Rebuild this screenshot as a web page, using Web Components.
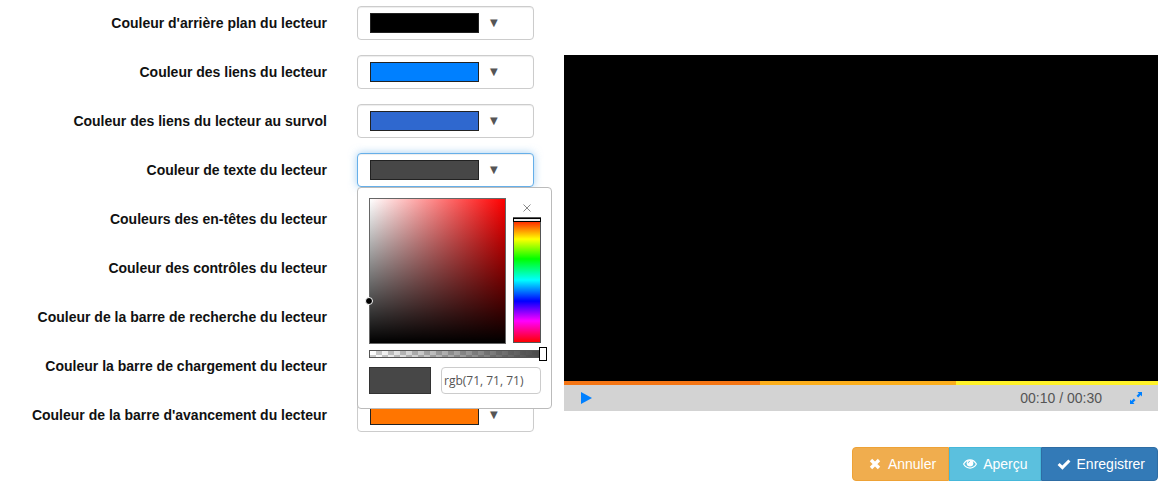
<!DOCTYPE html>
<html lang="fr">
<head>
<meta charset="utf-8">
<title>Couleurs du lecteur</title>
<meta name="viewport" content="width=device-width, initial-scale=1">
<style>
  body { margin: 0; background: #fff; color: #111; font: 14px/20px "Liberation Sans", Arial, sans-serif; }
</style>
</head>
<body>
<player-settings></player-settings>

<template id="settings-tpl">
  <style>
    :host { display: block; padding: 6px 7px 6px 0; }
    .page { display: grid; grid-template-columns: 534fr 594fr; column-gap: 30px; align-items: start; }
    form { display: grid; row-gap: 15px; }
    .preview { padding-top: 49px; }
    .actions { display: flex; justify-content: flex-end; margin-top: 36px; }
  </style>
  <main class="page">
    <form>
      <color-field label="Couleur d'arrière plan du lecteur" color="#000000"></color-field>
      <color-field label="Couleur des liens du lecteur" color="#0080ff"></color-field>
      <color-field label="Couleur des liens du lecteur au survol" color="#2f68cf"></color-field>
      <color-field label="Couleur de texte du lecteur" color="#474747" open>
        <color-picker></color-picker>
      </color-field>
      <color-field label="Couleurs des en-têtes du lecteur" color="#d3d3d3"></color-field>
      <color-field label="Couleur des contrôles du lecteur" color="#0080ff"></color-field>
      <color-field label="Couleur de la barre de recherche du lecteur" color="#fff020"></color-field>
      <color-field label="Couleur la barre de chargement du lecteur" color="#ffad17"></color-field>
      <color-field label="Couleur de la barre d'avancement du lecteur" color="#ff7500"></color-field>
    </form>
    <section class="preview">
      <video-preview></video-preview>
      <div class="actions">
        <action-button kind="cancel">
          <svg slot="icon" width="12" height="12" viewBox="0 0 12 12"><path d="M2 2 10 10M10 2 2 10" stroke="#fff" stroke-width="3.4" fill="none"/></svg>Annuler</action-button>
        <action-button kind="view">
          <svg slot="icon" width="14" height="12" viewBox="0 0 14 12"><path fill="none" stroke="#fff" stroke-width="1.2" d="M.6 6C2.200 3.300 4.400 1.900 7 1.900S11.800 3.300 13.400 6C11.800 8.700 9.600 10.100 7 10.100S2.200 8.700 .6 6Z"/><circle cx="7" cy="5.200" r="3.300" fill="#fff"/><path d="M5.200 5.200A1.800 1.800 0 0 1 7 3.400" stroke="#5bc0de" stroke-width=".8" fill="none"/></svg>Aperçu</action-button>
        <action-button kind="save">
          <svg slot="icon" width="14" height="12" viewBox="0 0 14 12"><path d="M1.600 6 5.400 9.600 12.400 2.500" stroke="#fff" stroke-width="3" fill="none"/></svg>Enregistrer</action-button>
      </div>
    </section>
  </main>
</template>

<template id="field-tpl">
  <style>
    :host { display: grid; grid-template-columns: 327fr 177fr; column-gap: 30px; align-items: center; }
    label { text-align: right; font-weight: 700; white-space: nowrap; }
    .control { position: relative; }
    button {
      box-sizing: border-box; display: flex; align-items: center; width: 100%; height: 34px; padding: 0 12px;
      gap: 11px; background: #fff; border: 1px solid #ccc; border-radius: 4px; cursor: pointer;
      box-shadow: inset 0 1px 1px rgba(0,0,0,.075); color: #555; font: 10px/20px "DejaVu Sans", sans-serif;
    }
    :host([open]) button { border-color: #66afe9; box-shadow: inset 0 1px 1px rgba(0,0,0,.075), 0 0 8px rgba(102,175,233,.6); }
    .swatch { box-sizing: border-box; width: 109px; height: 20px; border: 1px solid #222; }
    ::slotted(color-picker) { position: absolute; z-index: 2; top: 100%; left: 0; }
  </style>
  <label for="pick"></label>
  <div class="control">
    <button id="pick" type="button"><span class="swatch"></span><span aria-hidden="true">▼</span></button>
    <slot></slot>
  </div>
</template>

<template id="picker-tpl">
  <style>
    :host { display: block; box-sizing: border-box; width: 195px; padding: 10px 10px 14px 11px; background: #fff;
            border: 1px solid #bbb; border-radius: 4px; }
    .top { display: grid; grid-template-columns: 137px 28px; column-gap: 7px; }
    .plane { position: relative; box-sizing: border-box; height: 146px; border: 1px solid #666;
             background: linear-gradient(to top, #000, transparent), linear-gradient(to right, #fff, #f00); }
    .dot { position: absolute; box-sizing: border-box; left: -5px; top: 68%; width: 8px; height: 8px; border: 1px solid #fff; border-radius: 50%; background: #000; }
    .side { display: flex; flex-direction: column; align-items: center; }
    .close { height: 19px; width: 28px; padding: 0; border: 0; background: none; cursor: pointer; display: grid; place-items: center; }
    input { box-sizing: border-box; margin: 0; }
    input[type=range] { appearance: none; -webkit-appearance: none; display: block; border: 1px solid #555; }
    .hue { writing-mode: vertical-lr; width: 28px; height: 126px;
           background: linear-gradient(to bottom, #f00, #ff0 17%, #0f0 33%, #0ff 50%, #00f 67%, #f0f 83%, #f00); }
    .hue::-webkit-slider-thumb { -webkit-appearance: none; box-sizing: border-box; width: 28px; height: 4px; margin: 0 -1px; border: 1px solid #000; background: #eee; }
    .alpha { width: 174px; height: 8px; margin-top: 6px;
             background: linear-gradient(to right, transparent, #474747), repeating-conic-gradient(#fff 0 25%, #ccc 0 50%) 0 4px / 12px 12px; }
    .alpha::-webkit-slider-thumb { -webkit-appearance: none; box-sizing: border-box; width: 8px; height: 14px; border: 1px solid #000; background: #fff; position: relative; left: 5px; }
    .bottom { display: grid; grid-template-columns: 62px 100px; column-gap: 10px; margin-top: 9px; }
    .current { background: #474747; border: 1px solid #333; box-sizing: border-box; }
    .value { width: 100%; height: 27px; padding: 0 2px; border: 1px solid #ccc; border-radius: 4px; color: #555; font: 12px/16px "Open Sans", sans-serif; }
  </style>
  <div class="top">
    <div class="plane"><span class="dot"></span></div>
    <div class="side">
      <button class="close" type="button" aria-label="Fermer"><svg width="8" height="8" viewBox="0 0 8 8"><path d="M.5.5 7.500 7.500M7.500.5.5 7.500" stroke="#888"/></svg></button>
      <input class="hue" type="range" min="0" max="360" value="0" aria-label="Teinte">
    </div>
  </div>
  <input class="alpha" type="range" min="0" max="100" value="100" aria-label="Opacité">
  <div class="bottom">
    <div class="current"></div>
    <input class="value" type="text" value="rgb(71, 71, 71)" aria-label="Valeur de la couleur">
  </div>
</template>

<template id="video-tpl">
  <style>
    :host { display: block; color: #555; }
    .screen { background: #000; aspect-ratio: 594 / 326; }
    .progress { display: grid; grid-template-columns: 33fr 33fr 34fr; height: 4px; }
    .played { background: #f47514; } .loaded { background: #fbae1c; } .rest { background: #fff22a; }
    .bar { display: flex; align-items: center; height: 26px; padding: 0 15px 0 16px; background: #d3d3d3; }
    button { display: grid; place-items: center; padding: 0; border: 0; background: none; color: #0080ff; cursor: pointer; }
    .time { margin-left: auto; margin-right: 27px; }
  </style>
  <div class="screen"></div>
  <div class="progress"><div class="played"></div><div class="loaded"></div><div class="rest"></div></div>
  <div class="bar">
    <button type="button" aria-label="Lecture"><svg width="13" height="12" viewBox="0 0 13 12"><path d="M1 0 12 6 1 12Z" fill="currentColor"/></svg></button>
    <span class="time">00:10 / 00:30</span>
    <button type="button" aria-label="Plein écran"><svg width="14" height="12" viewBox="0 0 14 12"><path d="M8.500 0H13V4.500L11.600 3.100 9.200 5.500 7.500 3.800 9.900 1.400ZM5.500 12H1V7.500L2.400 8.900 4.800 6.500 6.500 8.200 4.100 10.600Z" fill="currentColor"/></svg></button>
  </div>
</template>

<template id="action-tpl">
  <style>
    :host { display: block; }
    button { box-sizing: border-box; display: flex; align-items: center; gap: 6px; height: 34px; padding: 0 12px 0 14px;
             border: 1px solid; color: #fff; font: inherit; cursor: pointer; white-space: nowrap; }
    ::slotted(svg) { display: block; }
    :host([kind=cancel]) button { background: #f0ad4e; border-color: #eea236; border-radius: 4px 0 0 4px; padding-left: 16px; gap: 7px; }
    :host([kind=view]) button { background: #5bc0de; border-color: #46b8da; padding-left: 13px; }
    :host([kind=save]) button { background: #337ab7; border-color: #2e6da4; border-radius: 0 4px 4px 0; padding-left: 15px; }
  </style>
  <button type="button"><slot name="icon"></slot><span><slot></slot></span></button>
</template>

<script>
  class TemplateElement extends HTMLElement {
    constructor() {
      super();
      this.attachShadow({ mode: "open" });
      const tpl = document.getElementById(this.constructor.template);
      this.shadowRoot.append(document.importNode(tpl.content, true));
    }
  }
  class ColorField extends TemplateElement {
    static template = "field-tpl";
    connectedCallback() {
      this.shadowRoot.querySelector("label").textContent = this.getAttribute("label");
      this.shadowRoot.querySelector(".swatch").style.background = this.getAttribute("color");
    }
  }
  class ColorPicker extends TemplateElement { static template = "picker-tpl"; }
  class VideoPreview extends TemplateElement { static template = "video-tpl"; }
  class ActionButton extends TemplateElement { static template = "action-tpl"; }
  class PlayerSettings extends TemplateElement { static template = "settings-tpl"; }

  customElements.define("color-field", ColorField);
  customElements.define("color-picker", ColorPicker);
  customElements.define("video-preview", VideoPreview);
  customElements.define("action-button", ActionButton);
  customElements.define("player-settings", PlayerSettings);
</script>
</body>
</html>
